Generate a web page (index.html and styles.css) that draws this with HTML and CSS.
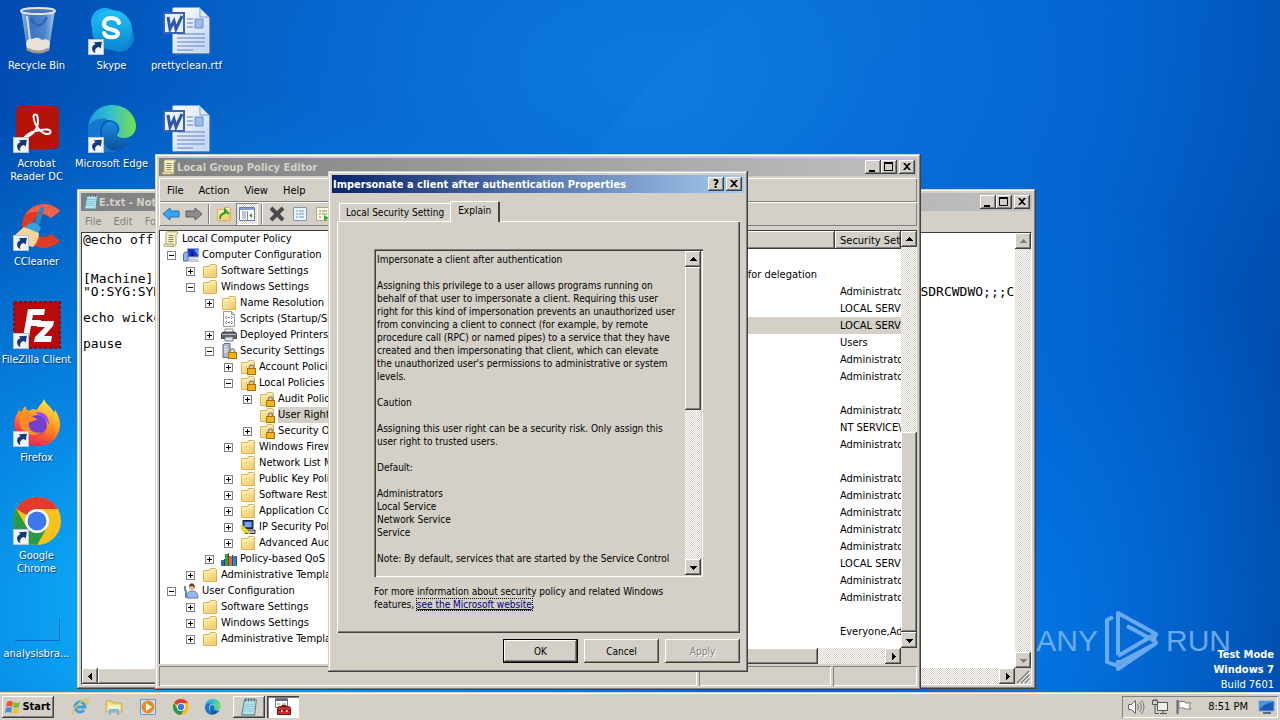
FILE: index.html
```
<!DOCTYPE html>
<html lang="en">
<head>
    <meta charset="utf-8">
    <title>Desktop</title>
    <link rel="stylesheet" href="styles.css">
</head>
<body>
    <svg class="sprite" aria-hidden="true">
        <defs>
            <linearGradient id="gFolder" x1="0" y1="0" x2="1" y2="1"><stop offset="0" stop-color="#fff2b4"/><stop offset="1" stop-color="#f0c662"/></linearGradient>
            <linearGradient id="gPage" x1="0" y1="0" x2="1" y2="1"><stop offset="0" stop-color="#fff"/><stop offset="1" stop-color="#bcd2f2"/></linearGradient>
            <linearGradient id="gEdgeA" x1="0" y1="0" x2="1" y2="0"><stop offset="0" stop-color="#1b9de2"/><stop offset=".5" stop-color="#35c1c9"/><stop offset="1" stop-color="#7be14a"/></linearGradient>
            <linearGradient id="gEdgeB" x1="0" y1="0" x2="0" y2="1"><stop offset="0" stop-color="#1b8fdc"/><stop offset="1" stop-color="#0c4f9e"/></linearGradient>
            <linearGradient id="gFire" x1=".8" y1="0" x2=".3" y2="1"><stop offset="0" stop-color="#fff04a"/><stop offset=".45" stop-color="#ff9a1f"/><stop offset=".75" stop-color="#ff4a3a"/><stop offset="1" stop-color="#e0206a"/></linearGradient>
            <linearGradient id="gBin" x1="0" y1="0" x2="1" y2="0"><stop offset="0" stop-color="#b8d0ec"/><stop offset=".3" stop-color="#4a7cc4"/><stop offset=".7" stop-color="#5f92d4"/><stop offset="1" stop-color="#d4e2f4"/></linearGradient>
            <linearGradient id="gSkype" x1="0" y1="0" x2="0" y2="1"><stop offset="0" stop-color="#20c4f4"/><stop offset="1" stop-color="#0a86d4"/></linearGradient>
        </defs>
        <symbol id="folder" viewBox="0 0 16 16"><path d="M1.500 3.500V14.500h13v-12L13 1.500H8.500L7.500 3.500z" fill="url(#gFolder)" stroke="#dcb050"/><path d="M10 2.500h3" stroke="#fff"/><path d="M2.500 5h11" stroke="#fff4c4"/></symbol>
        <symbol id="lock" viewBox="0 0 16 16"><path d="M9.500 10V8a2 2 0 0 1 4 0v2" fill="none" stroke="#8f8a70" stroke-width="1.500"/><rect x="7.500" y="9.500" width="8" height="6" fill="#f2b21e" stroke="#a87408"/></symbol>
        <symbol id="folderlock" viewBox="0 0 16 16"><use href="#folder"/><use href="#lock"/></symbol>
        <symbol id="serverlock" viewBox="0 0 16 16"><path d="M2 1.500 4 .5h5v12l-2 2H2z" fill="#aebcc8" stroke="#5b6b7a"/><path d="M3 4h3M3 6.500h3M3 9h3" stroke="#e8f4ff"/><use href="#lock"/></symbol>
        <symbol id="scroll" viewBox="0 0 16 16"><path d="M3 2.500C3 1 4 .8 5 .8h9c1 0 1 2.500-.5 2.500H13V13c0 1.800-1 2.300-2 2.300H2c-1.500 0-1.500-2.500 0-2.500h1z" fill="#f8f1cc" stroke="#a99c62"/><path d="M5.500 4.500h5M5.500 6.500h5M5.500 8.500h5M5.500 10.500h5" stroke="#8d8450"/><path d="M3 13h7.500v2" fill="none" stroke="#a99c62"/></symbol>
        <symbol id="computer" viewBox="0 0 16 16"><rect x="4.500" y="1.500" width="11" height="8.500" fill="#1534c8" stroke="#9aa8d0"/><path d="M11 2.500h4v6z" fill="#5a9cf4"/><path d="M8 9l1-5 2 5z" fill="#0a1878"/><path d="M6 12h8l1 2.500H6z" fill="#d4d8e2" stroke="#8890a4" stroke-width=".5"/><path d="M.5 6.500 2 5h3v9H.5z" fill="#8cb2e8" stroke="#4a70b4"/></symbol>
        <symbol id="user" viewBox="0 0 16 16"><circle cx="9" cy="4" r="3" fill="#e2b58e"/><path d="M6 4c0-5 6-5 6 1-1-2-4-3-6-1z" fill="#59422c"/><path d="M4 15c0-6 2-7 5-7s6 1 6 7z" fill="#9db8e0" stroke="#5a7cb0"/><path d="M2 3v4l1 1v7" fill="none" stroke="#6889b8" stroke-width="2"/></symbol>
        <symbol id="script" viewBox="0 0 16 16"><path d="M2.500.5h8l3 3v12h-11z" fill="#fff" stroke="#9a9a9a"/><path d="M10.500.5v3h3" fill="none" stroke="#9a9a9a"/><path d="M6 5 4.500 6.500 6 8M10 5l1.500 1.500L10 8M6 10l-1.500 1.500L6 13M10 10l1.500 1.500L10 13M7 6.500h2M7 11.500h2" fill="none" stroke="#606a78"/></symbol>
        <symbol id="printer" viewBox="0 0 16 16"><path d="M4 2h8v4H4z" fill="#fff" stroke="#888"/><path d="M.5 6.500 2 5h12l1.500 1.500v5H.5z" fill="#5d6268" stroke="#46494d"/><path d="M1 7.500h14" stroke="#b7bcc2"/><path d="M4 10h8v4H4z" fill="#d4e8f8" stroke="#777"/></symbol>
        <symbol id="ipsec" viewBox="0 0 16 16"><path d="M3 1.500h10v8H3z" fill="#163ac0" stroke="#222"/><path d="M4.500 3h7v5h-7z" fill="#7ba4ec"/><path d="M5 11h10v3.500H5z" fill="#b8b8b8" stroke="#333"/><path d="M1 6l6 6 2 3M1 9l5 5" stroke="#e8d820" stroke-width="2"/></symbol>
        <symbol id="qos" viewBox="0 0 16 16"><path d="M0 9h3v6H0z" fill="#2a68c8"/><path d="M4 3h3v12H4z" fill="#35a046"/><path d="M8 5h3v10H8z" fill="#e06a28"/><path d="M12 5h3v10h-3z" fill="#1c8ee0"/><path d="M3.500 8v7M7.500 2v13M11.500 4v11M15.500 5v10" stroke="#444"/></symbol>
        <symbol id="notepad" viewBox="0 0 16 16"><path d="M4 1.500h10.500L13 15H1.500z" fill="#b4e4ea" stroke="#5d8894"/><path d="M4 5.500h9M4 7.500h9M3.500 9.500h9M3 11.500h9" stroke="#8cc8d4"/><path d="M5 0v3M7.500 0v3M10 0v3M12.500 0v3" stroke="#5a6a70"/></symbol>
        <symbol id="toolbox" viewBox="0 0 20 18"><path d="M2.500.5h12v9h-12z" fill="#fff" stroke="#777"/><path d="M2 2h13" stroke="#667" stroke-width="2"/><path d="M4 6h3M9 6h4" stroke="#888"/><path d="M4.500 10.500q0-2 2-2h9q2 0 2 2v6h-13z" fill="#c83030" stroke="#7c1010"/><path d="M9 9V7.500h4V9M5 12.500h12" fill="none" stroke="#6e1212"/><path d="M8 12h1.500v2H8zM13 12h1.500v2H13z" fill="#eee"/></symbol>
        <symbol id="shortcut" viewBox="0 0 15 15"><path d="M.5.5h14v14H.5z" fill="#f2f5f8" stroke="#b7c4d2"/><path d="M6 13c-3.500-3-2.500-7 1-8L5.500 3 13 2.500 12 9l-1.800-1.600C7.500 8 6 10 7 13z" fill="#163a78"/></symbol>
        <symbol id="up" viewBox="0 0 9 9"><path d="M4 2h1v1h1v1h1v1h1v1H1V5h1V4h1V3h1z"/></symbol>
        <symbol id="down" viewBox="0 0 9 9"><path d="M1 3h7v1H7v1H6v1H5v1H4V6H3V5H2V4H1z"/></symbol>
        <symbol id="left" viewBox="0 0 9 9"><path d="M6 1v7H5V7H4V6H3V5H2V4h1V3h1V2h1V1z"/></symbol>
        <symbol id="right" viewBox="0 0 9 9"><path d="M3 1v7h1V7h1V6h1V5h1V4H6V3H5V2H4V1z"/></symbol>
        <symbol id="min" viewBox="0 0 10 10"><path d="M1 8h6v2H1z"/></symbol>
        <symbol id="max" viewBox="0 0 10 10"><path d="M0 0h9v9H0zM1 2v6h7V2z" fill-rule="evenodd"/></symbol>
        <symbol id="close" viewBox="0 0 10 10"><path d="M1 1h2l2 2 2-2h2L6 4.500 9 8H7L5 6 3 8H1l3-3.500z"/></symbol>
        <symbol id="chrome" viewBox="0 0 48 48"><circle cx="24" cy="24" r="24" fill="#f9c11c"/><path d="M24 24 3.200 12A24 24 0 0 1 44.800 12H24z" fill="#e23a2e"/><path d="M3.200 12A24 24 0 0 0 24 48l10.400-18L24 24 13.600 30z" fill="#2a9a48"/><path d="M24 12h20.800L34.400 30z" fill="#f9c11c"/><circle cx="24" cy="24" r="12" fill="#fff"/><circle cx="24" cy="24" r="9.500" fill="#3a78ec"/></symbol>
        <symbol id="edge" viewBox="0 0 48 48"><path d="M0 24C1 8 12 0 24 0c15 0 24 11 24 21 0 8-6 12-12 12-5 0-8-2-7-4 5-4 2-14-9-14C10 15 2 18 0 24z" fill="url(#gEdgeA)"/><path d="M0 24c1-7 9-12 19-10-8 4-11 20 1 28 4 3 8 4 12 3-18 8-33-5-32-21z" fill="#1478d0"/><path d="M14 27c0-6 4-11 10-10 6 2 7 8 4 12-1 4 8 7 16 5-6 10-17 13-22 11-5-3-8-10-8-18z" fill="url(#gEdgeB)"/></symbol>
        <symbol id="word" viewBox="0 0 48 48"><path d="M10 1h27l9 9v36H10z" fill="url(#gPage)" stroke="#e9f1fc"/><path d="M37 1v9h9z" fill="#e0ebfa" stroke="#7a9ccf"/><path d="M47 11v36H11" fill="none" stroke="#496fae"/><path d="M14 27h28M14 31h28M14 35h28M14 39h28M14 43h16" stroke="#8aa3d0" stroke-width="1.500"/><path d="M24 12h6M24 16h6M24 20h6" stroke="#8aa3d0" stroke-width="1.500"/><path d="M32 12h8v9h-8z" fill="#9db9e6" stroke="#6d8fc8"/><path d="M1 6h20v20H1z" fill="#e8f0fb" stroke="#3c64b2" stroke-width="2"/><path d="M5 10l2 12 4-8 2 8 6-13" fill="none" stroke="#2f57a8" stroke-width="3"/></symbol>
    </svg>

    <main class="desktop">
        <svg class="wallpaper" viewBox="0 0 1280 692" preserveAspectRatio="none" aria-hidden="true">
            <defs>
                <linearGradient id="beam" x1="0" y1="0" x2="1" y2="0"><stop offset="0" stop-color="#4ab8ff" stop-opacity="0"/><stop offset=".5" stop-color="#4ab8ff" stop-opacity=".05"/><stop offset="1" stop-color="#4ab8ff" stop-opacity="0"/></linearGradient>
            </defs>
            <path d="M330 692Q450 240 740 0h200Q560 330 480 692z" fill="url(#beam)"/>
        </svg>

        <nav class="shortcuts">
            <a class="shortcut" href="#bin"><svg class="big" viewBox="0 0 48 48"><path d="M8 3h34l-6 39q-11 6-22 0z" fill="url(#gBin)" opacity=".8"/><ellipse cx="25" cy="4" rx="17" ry="3" fill="#4c78b8" stroke="#e4e4e0" stroke-width="2"/><path d="M13 36q2-6 6-4 6-3 10 1 6-2 8 2l-1 8q-11 5-22 0z" fill="#e8e2d8"/><path d="M14 42q11 6 22 0" fill="none" stroke="#a09a94" stroke-width="3"/><path d="M14 9l3 24" stroke="#cfe0f6" stroke-width="2"/><path d="M18 12q8 14 16-2" fill="none" stroke="#2f62b4" stroke-width="2"/></svg><span>Recycle Bin</span></a>
            <a class="shortcut" href="#acrobat"><svg class="big" viewBox="0 0 48 48"><rect x="3" y="1" width="43" height="43" rx="5" fill="#b5120a"/><path d="M14 32c10-5 12-13 10.500-20-.5-3.500-4.500-3-4 0 1 9 8 17 14 17 4 0 4-4 0-4.500-7-.5-19 2.500-23 8" fill="none" stroke="#fff" stroke-width="2"/><use href="#shortcut" x="0" y="32" width="16" height="16"/></svg><span>Acrobat<br>Reader DC</span></a>
            <a class="shortcut" href="#ccleaner"><svg class="big" viewBox="0 0 48 48"><path d="M47 8A22 22 0 1 0 47 38L38 31A11 11 0 1 1 38 15z" fill="#dc3c24"/><path d="M47 8A22 22 0 0 0 12 12q12-8 26 3z" fill="#f0624a"/><path d="M27 5q4-3 4 1l-5 17-5-2z" fill="#2b84c8"/><path d="M16 21q7-3 12 4l-3 5L11 25z" fill="#3aa0dc"/><path d="M11 24l15 6q0 8-6 14-10-2-18-12z" fill="#f6d49a"/><use href="#shortcut" x="0" y="32" width="16" height="16"/></svg><span>CCleaner</span></a>
            <a class="shortcut" href="#filezilla"><svg class="big" viewBox="0 0 48 48"><rect x="1" y="1" width="46" height="46" fill="#b80a0a" stroke="#8c0a0a" stroke-width="2" stroke-dasharray="3 2"/><path d="M10 36 15 8h17l-1 6H20l-1 5h9l-1 6h-9l-2 11z" fill="#fff"/><path d="M25 20h16l-1 5-9 10h8l-1 6H21l1-5 10-10h-8z" fill="#fff"/><use href="#shortcut" x="0" y="32" width="16" height="16"/></svg><span>FileZilla Client</span></a>
            <a class="shortcut" href="#firefox"><svg class="big" viewBox="0 0 48 48"><path d="M31 0c-1 4-6 7-7 11-3-1-6-1-8 1-3-1-3-3-3-5-3 2-4 4-4 6L6 11C2 18 0 23 2 30c3 11 12 17 23 17 13 0 22-9 22-22 0-6-3-11-5-14-1 1-1 3-1 3C39 8 33 6 31 0z" fill="url(#gFire)"/><circle cx="24" cy="26" r="10" fill="#7240d0"/><path d="M6 14c7-3 9 1 16 5l3 1c-4 2-6 3-9 3-2 6 4 13 13 10-9 7-21 1-22-8z" fill="#ff8c22"/><path d="M22 14c8-3 15 4 14 12-2-5-6-8-14-12z" fill="#9a4cf0"/><use href="#shortcut" x="0" y="32" width="16" height="16"/></svg><span>Firefox</span></a>
            <a class="shortcut" href="#chrome-app"><svg class="big" viewBox="0 0 48 48"><use href="#chrome"/><use href="#shortcut" x="0" y="32" width="16" height="16"/></svg><span>Google<br>Chrome</span></a>
            <a class="shortcut" href="#analysis"><svg class="big" viewBox="0 0 48 48"><path d="M46.500 23v22.500H2" fill="none" stroke="#0e68c8"/></svg><span>analysisbra...</span></a>
            <a class="shortcut first-row" href="#skype"><svg class="big" viewBox="0 0 48 48"><circle cx="17" cy="15" r="14" fill="#1aaef0"/><circle cx="31" cy="30" r="15" fill="#1183d2"/><circle cx="24" cy="23" r="20" fill="url(#gSkype)"/><path d="M31 16c-1-4-5-5-8-5-4 0-7 2-7 6 0 7 14 4 14 10 0 4-12 5-14-1" fill="none" stroke="#fff" stroke-width="4" stroke-linecap="round"/><use href="#shortcut" x="0" y="32" width="16" height="16"/></svg><span>Skype</span></a>
            <a class="shortcut" href="#edge-app"><svg class="big" viewBox="0 0 48 48"><use href="#edge"/><use href="#shortcut" x="0" y="32" width="16" height="16"/></svg><span>Microsoft Edge</span></a>
            <a class="shortcut first-row" href="#rtf"><svg class="big" viewBox="0 0 48 48"><use href="#word"/></svg><span>prettyclean.rtf</span></a>
            <a class="shortcut" href="#doc" aria-label="Document"><svg class="big" viewBox="0 0 48 48"><use href="#word"/></svg></a>
        </nav>

        <div class="brand">
            <span>ANY</span>
            <svg class="brand-mark" viewBox="0 0 56 62" aria-hidden="true"><g fill="none" stroke="#8cc0f4" stroke-width="4" stroke-linejoin="round"><path d="M9 7 3 10v42l8 3 40-21"/><path d="M14 45V3l38 21-3 6-26-14"/><path d="M14 50v9l38-26-4-7-34 20"/></g></svg>
            <span>RUN</span>
        </div>
        <div class="build"><b>Test Mode</b><b>Windows 7</b><span>Build 7601</span></div>

        <section class="window notepad">
            <header class="titlebar">
                <svg class="icon"><use href="#notepad"/></svg>
                <h2>E.txt - Notepad</h2>
                <button class="cap" aria-label="Minimize"><svg><use href="#min"/></svg></button>
                <button class="cap" aria-label="Maximize"><svg><use href="#max"/></svg></button>
                <button class="cap close" aria-label="Close"><svg><use href="#close"/></svg></button>
            </header>
            <nav class="menubar dim"><button>File</button><button>Edit</button><button>Format</button></nav>
            <div class="scrollpane">
                <textarea class="note" aria-label="E.txt" readonly wrap="off">@echo off


[Machine]
"O:SYG:SYD:PA(A;;CCDCLCSWRPWPDTLOCRSDRCWDWO;;;SY)(A;;CCDCLCSWRPWPDTLOCRSDRCWDWO;;;BA)(A;;CCDCLCSWRPWPDTLOCRSDRCWDWO;;;CO)"

echo wicked

pause</textarea>
                <div class="vscroll off">
                    <button aria-label="Scroll up"><svg><use href="#up"/></svg></button>
                    <i class="track"></i>
                    <button aria-label="Scroll down"><svg><use href="#down"/></svg></button>
                </div>
                <div class="hscroll">
                    <button aria-label="Scroll left"><svg><use href="#left"/></svg></button>
                    <i class="thumb short"></i><i class="track"></i>
                    <button aria-label="Scroll right"><svg><use href="#right"/></svg></button>
                </div>
                <svg class="grip" viewBox="0 0 16 16"><path d="M2 15 14 3M6 15l8-8M10 15l4-4" stroke="#808080" stroke-width="1.500"/><path d="M4 15 15 4M8 15l7-7M12 15l3-3" stroke="#fff"/></svg>
            </div>
        </section>

        <section class="window gpedit">
            <header class="titlebar">
                <svg class="icon"><use href="#scroll"/></svg>
                <h2>Local Group Policy Editor</h2>
                <button class="cap" aria-label="Minimize"><svg><use href="#min"/></svg></button>
                <button class="cap" aria-label="Maximize"><svg><use href="#max"/></svg></button>
                <button class="cap close" aria-label="Close"><svg><use href="#close"/></svg></button>
            </header>
            <nav class="menubar boxed"><button>File</button><button>Action</button><button>View</button><button>Help</button></nav>
            <div class="toolbar boxed">
                <button aria-label="Back"><svg viewBox="0 0 18 16"><path d="M1 8l7-6v3h9v6H8v3z" fill="#3aa4ee" stroke="#1c6cb8"/></svg></button>
                <button aria-label="Forward"><svg viewBox="0 0 18 16"><path d="M17 8l-7-6v3H1v6h9v3z" fill="#8d8d8d" stroke="#5c5c5c"/></svg></button>
                <i class="sep"></i>
                <button aria-label="Up one level"><svg viewBox="0 0 16 16"><use href="#folder"/><path d="M4 13q0-5 5-6V4l4 4" fill="none" stroke="#2ba02b" stroke-width="2"/></svg></button>
                <button class="on" aria-label="Console tree"><svg viewBox="0 0 18 16"><path d="M1.500 1.500h15v13h-15z" fill="#fff" stroke="#6b7f9c"/><path d="M2 3h14" stroke="#7e9ccc" stroke-width="2"/><path d="M4 6h4M4 8h4M4 10h4M4 12h4M9.500 5v9" stroke="#7d8ea8"/><path d="M14 7v5l-3-2.500z" fill="#35a035"/></svg></button>
                <i class="sep"></i>
                <button aria-label="Delete"><svg viewBox="0 0 16 16"><path d="M2 2l12 12M14 2 2 14" stroke="#4b4b4b" stroke-width="4"/></svg></button>
                <button aria-label="Properties"><svg viewBox="0 0 16 16"><path d="M1.500 1.500h13v13h-13z" fill="#eaf4fc" stroke="#7c9ab4"/><path d="M4 5h2M7 5h5M4 8h2M7 8h5M4 11h2M7 11h5" stroke="#6f94b8"/></svg></button>
                <button aria-label="Export list"><svg viewBox="0 0 16 16"><path d="M1.500 1.500h13v13h-13z" fill="#fdfce6" stroke="#a8a888"/><path d="M4 5h2M7 5h5M4 8h2M7 8h5M4 11h2" stroke="#708050"/><path d="M9 9v6l5-3z" fill="#3aa83a"/></svg></button>
            </div>
            <div class="panes">
                <div class="tree">
                    <div class="node"><svg class="icon"><use href="#scroll"/></svg><span>Local Computer Policy</span></div>
                    <ul>
                        <li><div class="node"><button class="toggle open" aria-label="Collapse"></button><svg class="icon"><use href="#computer"/></svg><span>Computer Configuration</span></div>
                            <ul>
                                <li><div class="node"><button class="toggle" aria-label="Expand"></button><svg class="icon"><use href="#folder"/></svg><span>Software Settings</span></div></li>
                                <li><div class="node"><button class="toggle open" aria-label="Collapse"></button><svg class="icon"><use href="#folder"/></svg><span>Windows Settings</span></div>
                                    <ul>
                                        <li><div class="node"><button class="toggle" aria-label="Expand"></button><svg class="icon"><use href="#folder"/></svg><span>Name Resolution Policy</span></div></li>
                                        <li><div class="node"><i class="leaf"></i><svg class="icon"><use href="#script"/></svg><span>Scripts (Startup/Shutdown)</span></div></li>
                                        <li><div class="node"><button class="toggle" aria-label="Expand"></button><svg class="icon"><use href="#printer"/></svg><span>Deployed Printers</span></div></li>
                                        <li><div class="node"><button class="toggle open" aria-label="Collapse"></button><svg class="icon"><use href="#serverlock"/></svg><span>Security Settings</span></div>
                                            <ul>
                                                <li><div class="node"><button class="toggle" aria-label="Expand"></button><svg class="icon"><use href="#folderlock"/></svg><span>Account Policies</span></div></li>
                                                <li><div class="node"><button class="toggle open" aria-label="Collapse"></button><svg class="icon"><use href="#folderlock"/></svg><span>Local Policies</span></div>
                                                    <ul>
                                                        <li><div class="node"><button class="toggle" aria-label="Expand"></button><svg class="icon"><use href="#folderlock"/></svg><span>Audit Policy</span></div></li>
                                                        <li><div class="node"><i class="leaf"></i><svg class="icon"><use href="#folderlock"/></svg><span class="picked">User Rights Assignment</span></div></li>
                                                        <li><div class="node"><button class="toggle" aria-label="Expand"></button><svg class="icon"><use href="#folderlock"/></svg><span>Security Options</span></div></li>
                                                    </ul>
                                                </li>
                                                <li><div class="node"><button class="toggle" aria-label="Expand"></button><svg class="icon"><use href="#folder"/></svg><span>Windows Firewall</span></div></li>
                                                <li><div class="node"><i class="leaf"></i><svg class="icon"><use href="#folder"/></svg><span>Network List Manager</span></div></li>
                                                <li><div class="node"><button class="toggle" aria-label="Expand"></button><svg class="icon"><use href="#folder"/></svg><span>Public Key Policies</span></div></li>
                                                <li><div class="node"><button class="toggle" aria-label="Expand"></button><svg class="icon"><use href="#folder"/></svg><span>Software Restriction</span></div></li>
                                                <li><div class="node"><button class="toggle" aria-label="Expand"></button><svg class="icon"><use href="#folder"/></svg><span>Application Control</span></div></li>
                                                <li><div class="node"><button class="toggle" aria-label="Expand"></button><svg class="icon"><use href="#ipsec"/></svg><span>IP Security Policies</span></div></li>
                                                <li><div class="node"><button class="toggle" aria-label="Expand"></button><svg class="icon"><use href="#folder"/></svg><span>Advanced Audit Policy</span></div></li>
                                            </ul>
                                        </li>
                                        <li><div class="node"><button class="toggle" aria-label="Expand"></button><svg class="icon"><use href="#qos"/></svg><span>Policy-based QoS</span></div></li>
                                    </ul>
                                </li>
                                <li><div class="node"><button class="toggle" aria-label="Expand"></button><svg class="icon"><use href="#folder"/></svg><span>Administrative Templates</span></div></li>
                            </ul>
                        </li>
                        <li><div class="node"><button class="toggle open" aria-label="Collapse"></button><svg class="icon"><use href="#user"/></svg><span>User Configuration</span></div>
                            <ul>
                                <li><div class="node"><button class="toggle" aria-label="Expand"></button><svg class="icon"><use href="#folder"/></svg><span>Software Settings</span></div></li>
                                <li><div class="node"><button class="toggle" aria-label="Expand"></button><svg class="icon"><use href="#folder"/></svg><span>Windows Settings</span></div></li>
                                <li><div class="node"><button class="toggle" aria-label="Expand"></button><svg class="icon"><use href="#folder"/></svg><span>Administrative Templates</span></div></li>
                            </ul>
                        </li>
                    </ul>
                </div>
                <div class="scrollpane list">
                    <div class="rows">
                        <table>
                            <thead><tr><th>Policy</th><th>Security Setting</th></tr></thead>
                            <tbody>
                                <tr><td></td><td></td></tr>
                                <tr><td>for delegation</td><td></td></tr>
                                <tr><td></td><td>Administrators</td></tr>
                                <tr><td></td><td>LOCAL SERVICE</td></tr>
                                <tr class="picked"><td></td><td>LOCAL SERVICE</td></tr>
                                <tr><td></td><td>Users</td></tr>
                                <tr><td></td><td>Administrators</td></tr>
                                <tr><td></td><td>Administrators</td></tr>
                                <tr><td></td><td></td></tr>
                                <tr><td></td><td>Administrators</td></tr>
                                <tr><td></td><td>NT SERVICE\All</td></tr>
                                <tr><td></td><td>Administrators</td></tr>
                                <tr><td></td><td></td></tr>
                                <tr><td></td><td>Administrators</td></tr>
                                <tr><td></td><td>Administrators</td></tr>
                                <tr><td></td><td>Administrators</td></tr>
                                <tr><td></td><td>Administrators</td></tr>
                                <tr><td></td><td>Administrators</td></tr>
                                <tr><td></td><td>LOCAL SERVICE</td></tr>
                                <tr><td></td><td>Administrators</td></tr>
                                <tr><td></td><td>Administrators</td></tr>
                                <tr><td></td><td></td></tr>
                                <tr><td></td><td>Everyone,Administrators</td></tr>
                            </tbody>
                        </table>
                    </div>
                    <div class="vscroll">
                        <button aria-label="Scroll up"><svg><use href="#up"/></svg></button>
                        <i class="track"></i><i class="thumb half"></i>
                        <button aria-label="Scroll down"><svg><use href="#down"/></svg></button>
                    </div>
                    <div class="hscroll">
                        <button aria-label="Scroll left"><svg><use href="#left"/></svg></button>
                        <i class="thumb wide"></i><i class="track"></i>
                        <button aria-label="Scroll right"><svg><use href="#right"/></svg></button>
                    </div>
                </div>
            </div>
            <footer class="status"><i></i><i></i><i></i></footer>
        </section>

        <section class="window dialog" role="dialog" aria-labelledby="dlg">
            <header class="titlebar active">
                <h2 id="dlg">Impersonate a client after authentication Properties</h2>
                <button class="cap help" aria-label="Help">?</button>
                <button class="cap close" aria-label="Close"><svg><use href="#close"/></svg></button>
            </header>
            <div class="tabs" role="tablist">
                <button role="tab">Local Security Setting</button>
                <button role="tab" class="current" aria-selected="true">Explain</button>
            </div>
            <div class="page" role="tabpanel">
                <div class="explain">
                    <textarea aria-label="Explanation" readonly wrap="off">Impersonate a client after authentication

Assigning this privilege to a user allows programs running on
behalf of that user to impersonate a client. Requiring this user
right for this kind of impersonation prevents an unauthorized user
from convincing a client to connect (for example, by remote
procedure call (RPC) or named pipes) to a service that they have
created and then impersonating that client, which can elevate
the unauthorized user's permissions to administrative or system
levels.

Caution

Assigning this user right can be a security risk. Only assign this
user right to trusted users.

Default:

Administrators
Local Service
Network Service
Service

Note: By default, services that are started by the Service Control</textarea>
                    <div class="vscroll">
                        <button aria-label="Scroll up"><svg><use href="#up"/></svg></button>
                        <i class="thumb half"></i><i class="track"></i>
                        <button aria-label="Scroll down"><svg><use href="#down"/></svg></button>
                    </div>
                </div>
                <p>For more information about security policy and related Windows<br>features, <a href="#more">see the Microsoft website</a>.</p>
            </div>
            <div class="actions">
                <button class="push default">OK</button>
                <button class="push">Cancel</button>
                <button class="push" disabled>Apply</button>
            </div>
        </section>
    </main>

    <footer class="taskbar">
        <button class="start"><svg viewBox="0 0 16 16"><path d="M2 3q3-2 6 0L7 8Q4 6 1 8z" fill="#e8562a"/><path d="M9 3q3 2 6 0l-1 5q-3 2-6 0z" fill="#7cba3a"/><path d="M1 9q3-2 6 0l-1 5q-3-2-6 0z" fill="#3f8fdc"/><path d="M8 9q3 2 6 0l-1 5q-3 2-6 0z" fill="#f6c22c"/></svg>Start</button>
        <nav class="quick">
            <button aria-label="Internet Explorer"><svg viewBox="0 0 18 18"><path d="M13 12A5 5 0 1 1 14 9H5" fill="none" stroke="#3ca4e4" stroke-width="3"/><path d="M2 16C-1 13 13-1 17 2q1 2-2 5" fill="none" stroke="#f0c040" stroke-width="1.500"/></svg></button>
            <button aria-label="Explorer"><svg viewBox="0 0 18 18"><path d="M1 3h6l1 2h9v9H1z" fill="#f4d880" stroke="#c8a850"/><path d="M3 7h12v5H3z" fill="#eaf4c8"/><path d="M4 17v-6h10v6h-2v-3H6v3z" fill="#7ab8e4"/></svg></button>
            <button aria-label="Media Player"><svg viewBox="0 0 18 18"><path d="M1.500 1.500h15v15h-15z" fill="#cfe2f4" stroke="#6c98c4"/><circle cx="9" cy="9" r="6.500" fill="#f08a1c"/><path d="M7 5v8l6-4z" fill="#fff"/></svg></button>
            <button aria-label="Chrome"><svg viewBox="0 0 48 48"><use href="#chrome"/></svg></button>
            <button aria-label="Edge"><svg viewBox="0 0 48 48"><use href="#edge"/></svg></button>
        </nav>
        <button class="task" aria-label="Notepad"><svg><use href="#notepad"/></svg></button>
        <button class="task pressed" aria-label="Local Group Policy Editor"><svg><use href="#toolbox"/></svg></button>
        <div class="tray">
            <svg viewBox="0 0 18 16"><path d="M1.500 5.500h3l4-4v13l-4-4h-3z" fill="#fff" stroke="#666"/><path d="M10.500 5q2 3 0 6M12.500 3q3.500 5 0 10M14.500 1q5 7 0 14" fill="none" stroke="#777"/></svg>
            <svg viewBox="0 0 18 16"><path d="M6.500 3.500h10v8h-10z" fill="#eee" stroke="#555"/><path d="M9 14.500h7M12 12v2M1.500 1.500h5v4h-5zM4 6v8.500h4M3 0v2M5 0v2" fill="none" stroke="#555"/></svg>
            <svg viewBox="0 0 18 16"><path d="M2.500 1v14" stroke="#666" stroke-width="2"/><path d="M4 2.500h6l1 1.500h5l-2 3 2 3h-6L9 9H4z" fill="#fff" stroke="#777"/></svg>
            <time>8:51 PM</time>
            <svg viewBox="0 0 18 16"><path d="M1 2h15v10H1z" fill="#1c58b8" stroke="#7fa4cc"/><path d="M1 11Q6 4 16 3v-1H1z" fill="#4c98e4"/><path d="M5 14h8" stroke="#5c6c80" stroke-width="2"/></svg>
        </div>
    </footer>
</body>
</html>
```
FILE: styles.css
```
* {
    box-sizing: border-box;
}

:root {
    --face: #d4d0c8;
    --dither: repeating-conic-gradient(#fff 0 25%, #d4d0c8 0 50%) 0 0 / 2px 2px;
}

body {
    margin: 0;
    height: 100vh;
    display: flex;
    flex-direction: column;
    overflow: hidden;
    font-family: "DejaVu Sans Condensed", "DejaVu Sans", sans-serif;
    font-size: 11px;
    color: #000;
}

button {
    font: inherit;
    color: inherit;
    border: 0;
    padding: 0;
    background: none;
}

h2, p, ul {
    margin: 0;
    padding: 0;
    list-style: none;
}

h2 {
    font-size: 11px;
}

textarea {
    border: 0;
    margin: 0;
    resize: none;
    outline: 0;
    overflow: hidden;
    white-space: pre;
    color: #000;
}

.sprite {
    position: absolute;
    width: 0;
    height: 0;
}

.icon {
    width: 16px;
    height: 16px;
    flex: none;
}

/* desktop */
.desktop {
    position: relative;
    flex: 1;
    min-height: 0;
    background:
        radial-gradient(ellipse 620px 520px at 14% 88%, #10b8fc 0%, rgba(8, 150, 240, 0.8) 40%, rgba(0, 110, 220, 0) 100%),
        radial-gradient(ellipse 700px 420px at 50% 10%, rgba(14, 122, 224, 0.9) 0%, rgba(0, 100, 210, 0) 100%),
        radial-gradient(ellipse 300px 460px at 80% 90%, rgba(4, 120, 230, 0.9) 0%, rgba(0, 100, 210, 0) 100%),
        linear-gradient(100deg, #0048ac 0%, #0064d0 50%, #005cca 80%, #004aa8 100%);
}

.wallpaper {
    position: absolute;
    width: 100%;
    height: 100%;
}

.shortcuts {
    position: relative;
    display: grid;
    grid-auto-flow: column;
    grid-template-rows: repeat(7, 98px);
    grid-auto-columns: 75px;
    justify-content: start;
    margin-left: -1px;
    padding-top: 7px;
}

.shortcut {
    display: flex;
    flex-direction: column;
    align-items: center;
    gap: 4px;
    color: #fff;
    line-height: 13px;
    text-align: center;
    text-decoration: none;
    text-shadow: 1px 1px 1px #003a80;
    white-space: nowrap;
}

.first-row {
    grid-row: 1;
}

.big {
    width: 48px;
    height: 48px;
}

.brand {
    position: absolute;
    right: 49px;
    bottom: 20px;
    display: flex;
    align-items: center;
    gap: 6px;
    color: #8cc0f4;
    font: 30px "Liberation Sans Narrow", "Liberation Sans", sans-serif;
    opacity: 0.75;
}

.brand-mark {
    width: 56px;
    height: 62px;
}

.build {
    position: absolute;
    right: 6px;
    bottom: 0;
    display: flex;
    flex-direction: column;
    align-items: flex-end;
    line-height: 15px;
    color: #fff;
}

/* windows */
.window {
    position: absolute;
    display: flex;
    flex-direction: column;
    padding: 4px;
    background: var(--face);
    box-shadow: inset -1px -1px #404040, inset 1px 1px var(--face), inset -2px -2px #808080, inset 2px 2px #fff;
}

.notepad {
    left: 77px;
    top: 189px;
    width: 959px;
    height: 500px;
}

.gpedit {
    left: 155px;
    top: 154px;
    width: 766px;
    height: 536px;
}

.dialog {
    left: 328px;
    top: 171px;
    width: 420px;
    height: 501px;
    font-size: 10px;
}

.titlebar {
    flex: none;
    height: 18px;
    display: flex;
    align-items: center;
    padding: 0 2px;
    background: linear-gradient(90deg, #808080, #c0c0c0);
    color: var(--face);
}

.titlebar h2 {
    flex: 1;
    white-space: nowrap;
}

.titlebar.active {
    background: linear-gradient(90deg, #0a246a, #a6caf0);
    color: #fff;
    padding-left: 1px;
}

.cap,
.vscroll button,
.hscroll button,
.thumb {
    display: flex;
    align-items: center;
    justify-content: center;
    flex: none;
    background: var(--face);
    box-shadow: inset -1px -1px #404040, inset 1px 1px #fff, inset -2px -2px #808080;
}

.cap {
    width: 16px;
    height: 14px;
    color: #000;
}

.cap svg {
    width: 10px;
    height: 10px;
}

.close {
    margin-left: 2px;
}

.help {
    font-size: 12px;
    font-weight: bold;
}

.menubar {
    flex: none;
    display: flex;
    align-items: center;
    gap: 15px;
    padding: 0 8px;
    height: 21px;
}

.menubar.dim {
    gap: 12px;
    padding-left: 4px;
    color: #808080;
}

.boxed {
    height: 24px;
    box-shadow: inset 1px 1px #fff, inset -1px -1px #808080;
}

.menubar.boxed {
    margin-top: 2px;
}

.toolbar {
    flex: none;
    display: flex;
    align-items: center;
    gap: 1px;
    padding: 0 1px;
}

.toolbar button {
    width: 22px;
    height: 22px;
    display: flex;
    align-items: center;
    justify-content: center;
}

.toolbar svg {
    width: 18px;
    height: 16px;
}

.toolbar .on {
    background: var(--dither);
    box-shadow: inset 1px 1px #808080, inset -1px -1px #fff;
}

.sep {
    width: 2px;
    height: 20px;
    margin: 0 2px;
    border-left: 1px solid #808080;
    border-right: 1px solid #fff;
}

/* scroll bars */
.scrollpane {
    flex: 1;
    min-height: 0;
    display: grid;
    grid-template: 1fr 16px / 1fr 16px;
    background: var(--face);
}

.vscroll,
.hscroll {
    display: flex;
}

.vscroll {
    flex-direction: column;
    width: 16px;
}

.vscroll button,
.hscroll button {
    width: 16px;
    height: 16px;
}

.vscroll svg,
.hscroll svg {
    width: 9px;
    height: 9px;
}

.off svg {
    fill: #808080;
}

.track {
    flex: 1;
    background: var(--dither);
}

.thumb.half {
    flex: 0 0 44%;
}

.list .thumb.half {
    flex: 0 0 48%;
}

.thumb.short {
    flex: 0 0 30%;
}

.thumb.wide {
    flex: 0 0 80%;
}

.grip {
    width: 16px;
    height: 16px;
}

.notepad .scrollpane {
    border: 1px solid #404040;
    border-color: #404040 #fff #fff #404040;
}

.note {
    width: 100%;
    height: 100%;
    padding: 0 0 0 1px;
    font: 13px/13px "DejaVu Sans Mono", monospace;
}

/* policy editor */
.panes {
    flex: 1;
    min-height: 0;
    display: flex;
    gap: 4px;
    margin-top: 4px;
}

.tree {
    flex: 0 0 240px;
    overflow: hidden;
    padding: 0 0 0 3px;
    background: #fff;
    border-left: 1px solid #404040;
    border-top: 1px solid #404040;
}

.tree > ul {
    padding-left: 4px;
}

.tree li ul {
    padding-left: 19px;
}

.node {
    display: flex;
    align-items: center;
    gap: 3px;
    height: 16px;
    white-space: nowrap;
}

.node span {
    line-height: 16px;
}

.toggle,
.leaf {
    flex: none;
    width: 9px;
    height: 9px;
    margin-right: 4px;
}

.toggle {
    border: 1px solid #808080;
    background:
        linear-gradient(#000, #000) center / 5px 1px no-repeat,
        linear-gradient(#000, #000) center / 1px 5px no-repeat;
}

.toggle.open {
    background: linear-gradient(#000, #000) center / 5px 1px no-repeat;
}

.picked {
    background: var(--face);
}

.list {
    border-top: 1px solid #404040;
    border-left: 1px solid #404040;
}

.rows {
    overflow: hidden;
    background: #fff;
}

.rows table {
    width: 100%;
    table-layout: fixed;
    border-collapse: collapse;
}

.rows th,
.rows td {
    height: 17px;
    padding: 0 0 0 5px;
    line-height: 15px;
    text-align: left;
    font-weight: normal;
    white-space: nowrap;
    overflow: hidden;
}

.rows th {
    height: 18px;
    background: var(--face);
    box-shadow: inset -1px -1px #404040, inset 1px 1px #fff, inset -2px -2px #808080;
}

.rows th:last-child {
    width: 66px;
}

.rows td:first-child {
    padding-right: 18px;
    text-align: right;
}

.status {
    flex: none;
    height: 20px;
    margin-top: 2px;
    display: grid;
    grid-template-columns: 1fr 132px 84px;
    gap: 2px;
}

.status i {
    box-shadow: inset 1px 1px #808080, inset -1px -1px #fff;
}

/* properties dialog */
.tabs {
    flex: none;
    display: flex;
    align-items: flex-end;
    height: 28px;
    padding-left: 7px;
}

.tabs button {
    height: 18px;
    padding: 0 6px;
    border-left: 1px solid #fff;
    border-top: 1px solid #fff;
}

.tabs .current {
    height: 21px;
    padding: 0 7px 3px;
    margin-bottom: -1px;
    background: var(--face);
    border-right: 2px solid #404040;
    border-radius: 2px 2px 0 0;
    z-index: 1;
}

.page {
    flex: 1;
    min-height: 0;
    display: flex;
    flex-direction: column;
    gap: 8px;
    margin: 0 4px 0 5px;
    padding: 28px 37px 22px;
    box-shadow: inset 1px 1px #fff, inset -1px -1px #404040, inset -2px -2px #808080;
}

.explain {
    flex: 1;
    min-height: 0;
    display: flex;
    padding: 2px;
    box-shadow: inset 1px 1px #808080, inset 2px 2px #404040, inset -1px -1px #fff;
}

.explain textarea {
    flex: 1;
    min-width: 0;
    padding: 2px 0 0 1px;
    background: var(--face);
    font: 10px/13px "DejaVu Sans Condensed", "DejaVu Sans", sans-serif;
}

.page p {
    line-height: 13px;
    white-space: nowrap;
}

.page a {
    color: #000080;
    outline: 1px dotted #000;
}

.actions {
    display: flex;
    justify-content: flex-end;
    gap: 6px;
    padding: 6px 4px 5px;
}

.push {
    width: 75px;
    height: 24px;
    box-shadow: inset -1px -1px #404040, inset 1px 1px #fff, inset -2px -2px #808080;
}

.push.default {
    border: 1px solid #000;
}

.push:disabled {
    color: #808080;
    text-shadow: 1px 1px #fff;
}

/* taskbar */
.taskbar {
    flex: none;
    display: flex;
    align-items: center;
    height: 28px;
    padding: 3px 2px 2px;
    background: var(--face);
    box-shadow: inset 0 1px var(--face), inset 0 2px #fff;
}

.start,
.task {
    display: flex;
    align-items: center;
    justify-content: center;
    height: 22px;
    box-shadow: inset -1px -1px #404040, inset 1px 1px #fff, inset -2px -2px #808080;
}

.start {
    width: 52px;
    font-weight: bold;
    gap: 1px;
}

.start svg {
    width: 16px;
    height: 16px;
}

.quick {
    display: flex;
    gap: 16px;
    padding: 0 12px 0 17px;
}

.quick svg {
    display: block;
    width: 18px;
    height: 18px;
}

.quick button:last-child svg,
.quick button:nth-child(4) svg {
    width: 16px;
    height: 16px;
}

.task {
    width: 32px;
    margin-right: 2px;
}

.task svg {
    width: 20px;
    height: 18px;
}

.pressed {
    background: #fff;
    box-shadow: inset 1px 1px #404040, inset 2px 2px #808080, inset -1px -1px #fff;
}

.tray {
    margin-left: auto;
    display: flex;
    align-items: center;
    gap: 6px;
    height: 22px;
    padding: 0 2px 0 5px;
    box-shadow: inset 1px 1px #808080, inset -1px -1px #fff;
}

.tray svg {
    width: 18px;
    height: 16px;
}

.tray time {
    padding: 0 4px 0 9px;
}
```
